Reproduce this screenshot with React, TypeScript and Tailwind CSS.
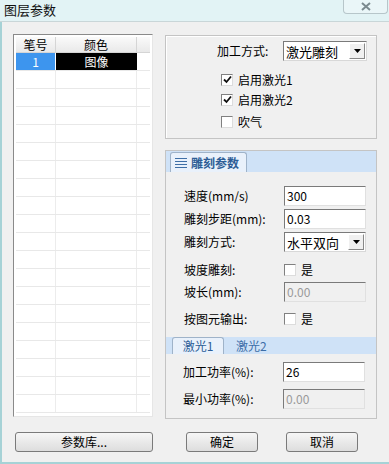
import { ReactNode } from "react";

const font = { fontFamily: '"Noto Sans CJK SC", "Liberation Sans", sans-serif' };

function Check({ checked }: { checked?: boolean }) {
  return (
    <span className="w-[12px] h-[12px] bg-white border border-t-[#808080] border-l-[#808080] border-r-[#dcdcdc] border-b-[#dcdcdc] flex items-center justify-center shrink-0">
      {checked && (
        <svg width="9" height="9" viewBox="0 0 9 9">
          <path d="M1 4.5 L3.5 7 L8 1.5" stroke="#111" strokeWidth="1.8" fill="none" />
        </svg>
      )}
    </span>
  );
}

function Select({ value, w }: { value: string; w: string }) {
  return (
    <div className={`${w} h-[20px] bg-white border border-t-[#7a7a7a] border-l-[#7a7a7a] border-r-[#d8d8d8] border-b-[#d8d8d8] flex items-center`}>
      <span className="flex-1 pl-[2px] text-[13px] text-black leading-none">{value}</span>
      <span className="w-[16px] h-[16px] mr-[1px] bg-[#f0f0f0] border border-t-[#fff] border-l-[#fff] border-r-[#888] border-b-[#888] flex items-center justify-center">
        <svg width="7" height="4" viewBox="0 0 7 4">
          <path d="M0 0 H7 L3.5 4 Z" fill="#000" />
        </svg>
      </span>
    </div>
  );
}

function Input({ value, disabled }: { value: string; disabled?: boolean }) {
  return (
    <div
      className={`w-[82px] h-[20px] border border-t-[#7a7a7a] border-l-[#7a7a7a] border-r-[#e0e0e0] border-b-[#e0e0e0] flex items-center pl-[2px] text-[12px] leading-none ${
        disabled ? "bg-[#f0f0f0] text-[#9a9a9a]" : "bg-white text-black"
      }`}
    >
      {value}
    </div>
  );
}

function Row({ label, children, mt }: { label: ReactNode; children: ReactNode; mt: string }) {
  return (
    <div className={`flex items-center h-[20px] ${mt}`}>
      <span className="w-[100px] text-[12px] text-black leading-none">{label}</span>
      {children}
    </div>
  );
}

function Button({ children, w }: { children: ReactNode; w: string }) {
  return (
    <div className={`${w} h-[20px] rounded-[3px] border border-[#7a7a7a] bg-linear-to-b from-[#f6f6f6] to-[#dddddd] flex items-center justify-center text-[12px] text-black leading-none`}>
      {children}
    </div>
  );
}

export default function App() {
  const rows = Array.from({ length: 19 });
  return (
    <div style={font} className="w-[389px] h-[464px] bg-[#f0f0f0] flex flex-col overflow-hidden">
      <div className="h-[22px] bg-[#e2f3f5] flex items-start justify-between border-b border-[#c9d6d8]">
        <span className="pl-[4px] pt-[3px] text-[13px] text-[#111] leading-none">图层参数</span>
        <div className="mr-[1px] w-[45px] h-[14px] border border-t-0 border-[#b7c6ca] rounded-b-[4px] bg-[#eaf6f8] flex items-center justify-center">
          <svg width="10" height="9" viewBox="0 0 10 9">
            <path d="M1 1 L9 8 M9 1 L1 8" stroke="#7b8a8f" strokeWidth="2" />
          </svg>
        </div>
      </div>

      <div className="flex-1 flex flex-col border-l-2 border-b-2 border-[#a6d2d6]">
        <div className="flex pl-[11px] pt-[12px]">
          {/* list */}
          <div className="w-[140px] h-[383px] border border-t-[#8a8a8a] border-l-[#8a8a8a] border-r-[#e6e6e6] border-b-[#e6e6e6] bg-white p-[2px] overflow-hidden">
            <div className="flex h-[16px] bg-linear-to-b from-[#fafafa] to-[#e9e9e9] border-b border-[#d5d5d5] text-[12px] leading-none">
              <div className="w-[40px] border-r border-[#d5d5d5] flex items-center justify-center">笔号</div>
              <div className="w-[81px] border-r border-[#d5d5d5] flex items-center justify-center">颜色</div>
              <div className="flex-1" />
            </div>
            <div className="flex h-[18px] border-b border-[#e8e8e8] text-[12px] leading-none">
              <div className="w-[40px] bg-[#3d95ee] text-white flex items-center justify-center border-r border-white">1</div>
              <div className="w-[81px] bg-black text-white flex items-center justify-center">图像</div>
              <div className="flex-1" />
            </div>
            {rows.map((_, i) => (
              <div key={i} className="flex h-[18px] border-b border-[#e8e8e8]">
                <div className="w-[40px] border-r border-[#ececec]" />
                <div className="w-[81px] border-r border-[#ececec]" />
                <div className="flex-1" />
              </div>
            ))}
          </div>

          <div className="ml-[12px] w-[212px] flex flex-col">
            {/* group box */}
            <div className="mt-[1px] h-[104px] border border-[#c4c4c4] shadow-[inset_1px_1px_0_#fff] pl-[51px] pt-[5px] flex flex-col">
              <div className="flex items-center h-[20px]">
                <span className="w-[66px] text-[12px] text-black leading-none">加工方式:</span>
                <Select value="激光雕刻" w="w-[84px]" />
              </div>
              <div className="pl-[4px] mt-[12px] flex flex-col text-[12px] text-black leading-none">
                <div className="flex items-center gap-[5px] h-[13px]"><Check checked />启用激光1</div>
                <div className="flex items-center gap-[5px] h-[13px] mt-[7px]"><Check checked />启用激光2</div>
                <div className="flex items-center gap-[5px] h-[13px] mt-[9px]"><Check />吹气</div>
              </div>
            </div>

            {/* engraving panel */}
            <div className="mt-[11px] h-[269px] border border-[#c4c4c4] flex flex-col">
              <div className="h-[21px] bg-[#cfe2f7] flex items-end pl-[4px]">
                <div className="w-[77px] h-[20px] bg-[#e9f1fb] border border-b-0 border-[#9fb3c9] rounded-t-[3px] flex items-center gap-[4px] pl-[4px]">
                  <svg width="12" height="11" viewBox="0 0 12 11">
                    <path d="M0 1.5 H12 M0 4.5 H12 M0 7.5 H12 M0 10.5 H12" stroke="#3f6fa6" strokeWidth="1" />
                  </svg>
                  <span className="text-[12px] font-bold text-[#2d5d96] leading-none">雕刻参数</span>
                </div>
              </div>
              <div className="pl-[18px] flex flex-col">
                <Row label="速度(mm/s)" mt="mt-[14px]"><Input value="300" /></Row>
                <Row label="雕刻步距(mm):" mt="mt-[3px]"><Input value="0.03" /></Row>
                <Row label="雕刻方式:" mt="mt-[3px]"><Select value="水平双向" w="w-[82px]" /></Row>
                <Row label="坡度雕刻:" mt="mt-[8px]">
                  <span className="flex items-center gap-[5px] text-[12px] leading-none"><Check />是</span>
                </Row>
                <Row label="坡长(mm):" mt="mt-[2px]"><Input value="0.00" disabled /></Row>
                <Row label="按图元输出:" mt="mt-[7px]">
                  <span className="flex items-center gap-[5px] text-[12px] leading-none"><Check />是</span>
                </Row>
              </div>
              <div className="mt-[8px] h-[17px] bg-[#cfe2f7] flex items-end pl-[6px]">
                <div className="w-[52px] h-[17px] bg-[#e9f1fb] border border-b-0 border-[#9fb3c9] rounded-t-[3px] flex items-center justify-center text-[12px] text-[#2d5d96] leading-none">
                  激光1
                </div>
                <div className="ml-[12px] h-[17px] flex items-center text-[12px] text-[#3d6ea8] leading-none">激光2</div>
              </div>
              <div className="pl-[17px] flex flex-col">
                <div className="flex items-center h-[20px] mt-[8px]">
                  <span className="w-[100px] text-[12px] text-black leading-none">加工功率(%):</span>
                  <Input value="26" />
                </div>
                <div className="flex items-center h-[20px] mt-[7px]">
                  <span className="w-[100px] text-[12px] text-black leading-none">最小功率(%):</span>
                  <Input value="0.00" disabled />
                </div>
              </div>
            </div>
          </div>
        </div>

        <div className="flex pl-[13px] mt-[13px]">
          <Button w="w-[138px]">参数库...</Button>
          <Button w="w-[72px] ml-[33px]">确定</Button>
          <Button w="w-[72px] ml-[28px]">取消</Button>
        </div>
      </div>
    </div>
  );
}
